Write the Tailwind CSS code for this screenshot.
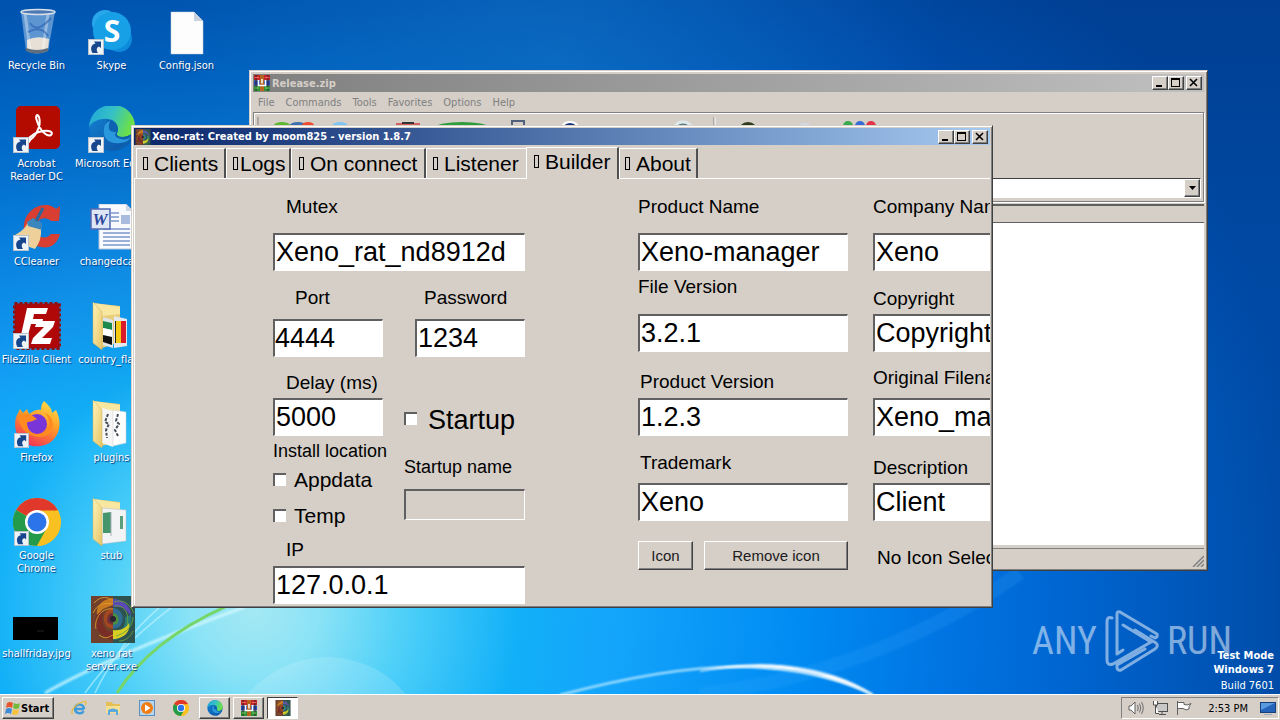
<!DOCTYPE html>
<html lang="en">
  <head>
    <meta charset="UTF-8" />
    <meta name="viewport" content="width=device-width, initial-scale=1.0" />
    <title>Xeno-rat: Created by moom825 - version 1.8.7</title>
    <script src="https://cdn.jsdelivr.net/npm/@tailwindcss/browser@4"></script>
  </head>
  <body class="relative min-h-screen flex flex-col overflow-hidden bg-[#0080e8] font-['DejaVu_Sans_Condensed','DejaVu_Sans',sans-serif] text-[11px] leading-[13px] text-black">
    <!-- Shared icons -->
    <svg class="absolute size-0" aria-hidden="true">
      <defs>
        <linearGradient id="edgeTop" x1="0" y1="0" x2="1" y2="0.3">
          <stop offset="0" stop-color="#1fa5dc" /><stop offset="0.55" stop-color="#35c1c4" /><stop offset="1" stop-color="#6be04a" />
        </linearGradient>
        <linearGradient id="edgeLow" x1="0" y1="0" x2="1" y2="1">
          <stop offset="0" stop-color="#1485d6" /><stop offset="1" stop-color="#0c4fa0" />
        </linearGradient>
        <linearGradient id="folder" x1="0" y1="0" x2="1" y2="1">
          <stop offset="0" stop-color="#fff3b8" /><stop offset="1" stop-color="#e6c566" />
        </linearGradient>
      </defs>
      <symbol id="shortcut" viewBox="0 0 16 16">
        <rect x="0.5" y="0.5" width="15" height="15" fill="#eef3f8" stroke="#b9c3cf" />
        <path d="M4.500 14C2 10 3 5 7.500 4.500L6 2.500L13 2.500L13 9L11 7.500C8.500 8.500 8 11 10 14Z" fill="#17468c" />
      </symbol>
      <symbol id="rar" viewBox="0 0 16 16">
        <rect x="0" y="0" width="16" height="5" fill="#c2262b" />
        <rect x="0" y="5.500" width="16" height="5" fill="#2b4bb0" />
        <rect x="0" y="11" width="16" height="5" fill="#2f8f36" />
        <path d="M2 0V16M14 0V16" stroke="#1c1c1c" stroke-width="0.800" />
        <rect x="6" y="0" width="4" height="16" fill="#b5651d" />
        <path d="M4.500 5V10.500H11.500V5M8 4V8.500" stroke="#fff" stroke-width="1.500" fill="none" />
        <path d="M1 2.500H5M11 2.500H15" stroke="#f06a5a" /><path d="M1 13H5M11 13H15" stroke="#72d163" />
      </symbol>
      <symbol id="xeno" viewBox="0 0 44 48">
        <rect width="44" height="48" fill="#4d4e3c" />
        <rect width="22" height="48" fill="#70402c" />
        <rect x="22" width="22" height="48" fill="#2d5250" />
        <path d="M22 3C10 4 5 12 6 20L12 14L22 10Z" fill="#c8791f" />
        <path d="M6 20C2 30 6 40 22 45V38C12 36 10 28 12 16Z" fill="#7a2c26" />
        <path d="M22 4C34 4 41 14 40 22C36 14 30 11 22 12Z" fill="#5a49b5" />
        <path d="M40 20C42 32 34 44 22 45V38C30 38 35 32 34 22Z" fill="#287a78" />
        <path d="M22 35C30 36 35 33 38 28C40 37 32 44 22 44Z" fill="#d8cf24" />
        <path d="M22 13C13 14 10 24 16 32L22 34Z" fill="#a2481f" />
        <path d="M22 13C32 14 35 25 28 32L22 34Z" fill="#316b92" />
        <path d="M22 18C17 18 15 24 17 28L22 30Z" fill="#6e2d38" />
        <path d="M22 18C28 19 29 25 26 29L22 30Z" fill="#4c8d42" />
        <path d="M3 8C10 0 18 2 22 6M2 18C7 8 14 8 22 9M5 34C3 26 9 12 22 14M8 40C16 46 20 40 22 40" fill="none" stroke="#de9b2d" stroke-width="0.900" />
        <path d="M23 7C34 3 40 12 43 18M23 11C36 9 38 22 36 30M25 41C36 38 42 30 42 22M28 46C36 46 40 40 42 36" fill="none" stroke="#6ba13b" stroke-width="0.900" />
        <circle cx="22" cy="24" r="3" fill="#2a2430" />
      </symbol>
      <symbol id="edge" viewBox="0 0 48 48">
        <circle cx="24" cy="24" r="23" fill="url(#edgeLow)" />
        <path d="M1 23C2 9 12 1 25 1C38 1 47 11 47 22C47 29 41 33 34 33C29 33 28 30 29.500 28C31 25 30 16 20 15C11 14 4 18 1 23Z" fill="url(#edgeTop)" />
        <path d="M20 16C29 17 31 25 29.500 28C28 30 29 33 34 33C39 33 43 31 45 29C42 41 33 47 24 47C32 44 35 41 36 38C25 41 16 36 16 27C16 22 18 18 20 16Z" fill="#0e61b0" />
        <path d="M16 25C14 36 24 42 37 38C40 37 43 34 45 30C43 35 36 37 30 34C26 32 27 30 28 28C22 28 19 26 22 17C18 18 16 21 16 25Z" fill="#2a98dc" />
      </symbol>
      <symbol id="chrome" viewBox="0 0 48 48">
        <circle cx="24" cy="24" r="24" fill="#f8c020" />
        <path d="M24 24L3.200 12A24 24 0 0 1 44.800 12Z" fill="#e0392c" />
        <path d="M24 24L3.200 12A24 24 0 0 0 24 48L34 30Z" fill="#249a4b" />
        <path d="M24 12.500H44.800A24 24 0 0 1 24 48L34 30Z" fill="#f8c020" />
        <circle cx="24" cy="24" r="12" fill="#fff" />
        <circle cx="24" cy="24" r="9.500" fill="#2c74ea" />
      </symbol>
      <symbol id="folderBack" viewBox="0 0 48 48">
        <path d="M5 1L32 4V40L14 46L5 40Z" fill="#e9cd78" />
        <path d="M5 1L32 5V12L14 14Z" fill="#f8e7a1" />
      </symbol>
      <symbol id="folderFlap" viewBox="0 0 48 48">
        <path d="M5 0L14 10V48L5 41Z" fill="url(#folder)" stroke="#cfb15c" stroke-width="0.500" />
      </symbol>
      <symbol id="minimize" viewBox="0 0 12 10"><rect x="2" y="7" width="6" height="2" /></symbol>
      <symbol id="maximize" viewBox="0 0 12 10"><path d="M1 0H10V9H1ZM2 2V8H9V2Z" fill-rule="evenodd" /></symbol>
      <symbol id="close" viewBox="0 0 12 10"><path d="M2 1L9 8M9 1L2 8" stroke="#000" stroke-width="1.600" /></symbol>
    </svg>

    <!-- Wallpaper -->
    <svg class="absolute inset-0 w-full h-full" viewBox="0 0 1280 720" preserveAspectRatio="none" aria-hidden="true">
      <defs>
        <radialGradient id="glow" gradientUnits="userSpaceOnUse" cx="255" cy="610" r="1050">
          <stop offset="0" stop-color="#a4e8f4" />
          <stop offset="0.06" stop-color="#8be3f6" />
          <stop offset="0.14" stop-color="#4fd0f8" />
          <stop offset="0.25" stop-color="#12b0f8" />
          <stop offset="0.34" stop-color="#14a5fb" />
          <stop offset="0.52" stop-color="#008bf3" />
          <stop offset="0.66" stop-color="#0074e2" />
          <stop offset="0.8" stop-color="#0062cc" />
          <stop offset="1" stop-color="#004aa4" />
        </radialGradient>
        <linearGradient id="shade" x1="0" y1="0" x2="0" y2="1">
          <stop offset="0" stop-color="#003888" stop-opacity="0.6" />
          <stop offset="0.25" stop-color="#003f94" stop-opacity="0.4" />
          <stop offset="0.6" stop-color="#004cb0" stop-opacity="0" />
        </linearGradient>
        <radialGradient id="topGlow" gradientUnits="userSpaceOnUse" cx="560" cy="60" r="380">
          <stop offset="0" stop-color="#1478c8" stop-opacity="0.5" />
          <stop offset="1" stop-color="#1078d0" stop-opacity="0" />
        </radialGradient>
        <filter id="soft"><feGaussianBlur stdDeviation="1.200" /></filter>
      </defs>
      <rect width="1280" height="720" fill="url(#glow)" />
      <rect width="1280" height="720" fill="url(#shade)" />
      <rect width="1280" height="300" fill="url(#topGlow)" />
      <path d="M240 700Q280 655 330 656Q385 660 410 700Z" fill="#fff" opacity="0.14" />
      <path d="M45 692Q110 655 245 606" stroke="#d8fbff" stroke-width="3" fill="none" opacity="0.8" filter="url(#soft)" />
      <path d="M85 692Q115 650 172 606M95 692Q120 640 160 606" stroke="#c8f6ff" stroke-width="1.500" fill="none" opacity="0.6" />
      <path d="M117 692Q150 640 225 606" stroke="#76d668" stroke-width="3" fill="none" />
      <path d="M560 694Q690 660 765 667Q830 672 873 694" stroke="#bdeaff" stroke-width="2" fill="none" filter="url(#soft)" />
      <path d="M700 670Q745 663 785 668Q835 675 873 694Q840 671 785 665Q745 661 700 670Z" fill="#fff" stroke="#fff" stroke-width="1" filter="url(#soft)" />
      <path d="M700 694Q880 670 1020 572" stroke="#4db4ff" stroke-width="14" fill="none" opacity="0.15" filter="url(#soft)" />
    </svg>

    <main class="relative flex-1">
      <nav aria-label="Desktop" class="grid grid-flow-col grid-rows-[repeat(7,98px)] auto-cols-[75px] w-max -ml-px pt-2 text-center text-white [text-shadow:1px_1px_1px_#003a80]">
        <a href="#" class="flex flex-col items-center gap-[3px]">
          <svg class="size-12" viewBox="0 0 48 48">
            <path d="M8 4L13 43Q24 48 35 43L42 4Z" fill="#a8c8ea" opacity="0.55" />
            <path d="M14 32Q24 27 36 31L35 42Q24 47 14 42Z" fill="#e6e0d6" />
            <path d="M12 6L17 41M35 6L30 41" stroke="#fff" stroke-width="3" opacity="0.35" />
            <path d="M17 15Q24 26 38 10M15 24Q28 17 35 28" stroke="#295fae" stroke-width="2" fill="none" opacity="0.6" />
            <path d="M13 40Q24 44 35 40L35 43Q24 48 13 43Z" fill="#5f6e7c" />
            <ellipse cx="25" cy="4" rx="17" ry="2.500" fill="#4c78b4" stroke="#d6dfe8" stroke-width="1.500" />
          </svg>
          Recycle Bin
        </a>
        <a href="#" class="flex flex-col items-center gap-[3px]">
          <svg class="size-12" viewBox="0 0 48 48">
            <rect x="3" y="0" width="44" height="43" rx="5" fill="#b30b00" />
            <path d="M15 35C22 32 29 20 26 11C24 7 22 10 24 15C27 25 34 31 38 29C41 26 36 24 30 25C23 26 17 30 14 35C13 38 15 38 18 33" fill="none" stroke="#fff" stroke-width="2" />
            <use href="#shortcut" x="0" y="31" width="16" height="16" />
          </svg>
          <span>Acrobat<br />Reader DC</span>
        </a>
        <a href="#" class="flex flex-col items-center gap-[3px]">
          <svg class="size-12" viewBox="0 0 48 48">
            <path d="M47 5L46 17H38C33 12 24 14 23 23C22 33 32 37 38 30H47C44 41 36 45 28 43C16 41 9 33 11 20C13 7 24 0 35 1C40 2 41 4 43 5L47 2Z" fill="#d93e32" />
            <path d="M2 31Q12 26 15 18L28 25Q29 36 22 45Q12 43 2 31Z" fill="#eed19a" />
            <path d="M14 18L20 14L29 19V26L15 22Z" fill="#3b86bd" />
            <path d="M23 17L30 4" stroke="#2b679b" stroke-width="3" />
            <use href="#shortcut" x="0" y="31" width="16" height="16" />
          </svg>
          CCleaner
        </a>
        <a href="#" class="flex flex-col items-center gap-[3px]">
          <svg class="size-12" viewBox="0 0 48 48">
            <rect x="1.500" y="1.500" width="45" height="45" fill="#b00808" stroke="#8f1212" stroke-width="3" stroke-dasharray="3 2" />
            <path d="M14 6H35L33 12H21L20 17H30L29 22H18L15 33H8Z" fill="#fff" />
            <path d="M24 19H42L40 25L29 36H39L37 42H18L20 36L31 25H22Z" fill="#fff" />
            <use href="#shortcut" x="0" y="31" width="16" height="16" />
          </svg>
          <span class="whitespace-nowrap">FileZilla Client</span>
        </a>
        <a href="#" class="flex flex-col items-center gap-[3px]">
          <svg class="size-12" viewBox="0 0 48 48">
            <defs>
              <linearGradient id="fox" x1="0.8" y1="0" x2="0.3" y2="1"><stop offset="0" stop-color="#ffe04a" /><stop offset="0.45" stop-color="#ff9a26" /><stop offset="1" stop-color="#f0305a" /></linearGradient>
            </defs>
            <path d="M31 1C35 5 39 8 39 13L43 10C48 20 48 31 41 39C33 48 17 49 8 40C1 33 1 21 4 15L7 9L10 13L14 9L16 14C21 10 25 9 28 10C28 6 29 3 31 1Z" fill="url(#fox)" />
            <circle cx="24" cy="24" r="10" fill="#7a35d8" />
            <path d="M5 17C10 12 17 13 24 19C20 21 18 22 14 22C13 33 25 38 33 31C39 26 36 16 31 12C39 16 42 23 38 31C32 42 8 38 5 17Z" fill="#ff8b20" />
            <use href="#shortcut" x="1" y="33" width="15" height="15" />
          </svg>
          Firefox
        </a>
        <a href="#" class="flex flex-col items-center gap-[3px]">
          <svg class="size-12" viewBox="0 0 48 48">
            <use href="#chrome" width="48" height="48" />
            <use href="#shortcut" x="1" y="33" width="15" height="15" />
          </svg>
          <span>Google<br />Chrome</span>
        </a>
        <a href="#" class="flex flex-col items-center gap-[3px]">
          <svg class="size-12" viewBox="0 0 48 48"><rect x="0" y="21" width="45" height="23" fill="#000" /><path d="M24 35H31" stroke="#222" /></svg>
          shallfriday.jpg
        </a>
        <a href="#" class="flex flex-col items-center gap-[3px]">
          <svg class="size-12" viewBox="0 0 48 48">
            <circle cx="17" cy="15" r="13" fill="#28a8ea" /><circle cx="31" cy="31" r="13" fill="#0f8bdc" /><circle cx="24" cy="23" r="19" fill="#17a0e6" />
            <text x="24" y="34" text-anchor="middle" font-family="Open Sans, sans-serif" font-weight="700" font-size="30" fill="#fff" style="text-shadow: none">S</text>
            <use href="#shortcut" x="0" y="31" width="16" height="16" />
          </svg>
          Skype
        </a>
        <a href="#" class="flex flex-col items-center gap-[3px]">
          <svg class="size-12" viewBox="0 0 48 48">
            <use href="#edge" y="-2" width="48" height="48" />
            <use href="#shortcut" x="0" y="31" width="16" height="16" />
          </svg>
          <span class="whitespace-nowrap">Microsoft Edge</span>
        </a>
        <a href="#" class="flex flex-col items-center gap-[3px]">
          <svg class="size-12" viewBox="0 0 48 48">
            <path d="M11 0H38L45 7V45H11Z" fill="#f8fafd" stroke="#b5c2dc" />
            <path d="M38 0V7H45Z" fill="#cdd6e6" />
            <path d="M23 9H31M23 13H31M23 17H31M15 25H42M15 29H42M15 33H42M15 37H42M15 41H42" stroke="#7c98cc" stroke-width="1.500" />
            <rect x="33" y="11" width="9" height="9" fill="#a9bce0" />
            <rect x="3" y="5" width="19" height="20" fill="#dfe6f6" stroke="#5168b2" stroke-width="1.500" />
            <text x="12" y="21" text-anchor="middle" font-family="Liberation Serif, serif" font-weight="700" font-style="italic" font-size="17" fill="#2c469c" style="text-shadow: none">W</text>
          </svg>
          changedca...
        </a>
        <a href="#" class="flex flex-col items-center gap-[3px]">
          <svg class="size-12" viewBox="0 0 48 48">
            <use href="#folderBack" width="48" height="48" />
            <path d="M15 15L25 18V46L15 43Z" fill="#dde4ec" /><path d="M15 19L24 21V28L15 26Z" fill="#1c8a4c" /><path d="M15 26L24 28V35L15 33Z" fill="#fff" /><path d="M15 33L24 35V43L15 40Z" fill="#111" />
            <path d="M26 14L39 17V44L26 46Z" fill="#e4e7ec" /><path d="M27 19H29V41H27Z" fill="#222" /><path d="M28 19H33V41H28Z" fill="#f6c914" /><path d="M33 19H38V41H33Z" fill="#d81c2c" />
            <use href="#folderFlap" width="48" height="48" />
          </svg>
          <span class="whitespace-nowrap">country_flags</span>
        </a>
        <a href="#" class="flex flex-col items-center gap-[3px]">
          <svg class="size-12" viewBox="0 0 48 48">
            <use href="#folderBack" width="48" height="48" />
            <path d="M14 8L25 11V47L14 43Z" fill="#f6f6f6" /><path d="M25 10L38 12V43L25 46Z" fill="#fff" stroke="#c8c8c8" stroke-width="0.500" />
            <path d="M20 14L17 22L21 24L18 30L19 38M30 14L28 21L31 24L27 30L30 36" stroke="#46505a" stroke-width="2" fill="none" stroke-dasharray="3 1.500" />
            <use href="#folderFlap" width="48" height="48" />
          </svg>
          plugins
        </a>
        <a href="#" class="flex flex-col items-center gap-[3px]">
          <svg class="size-12" viewBox="0 0 48 48">
            <use href="#folderBack" width="48" height="48" />
            <path d="M14 10L38 12V43L14 46Z" fill="#f2f3f5" stroke="#b8bcc2" stroke-width="0.500" /><path d="M15 15L23 14V35H15Z" fill="#45966c" /><path d="M32 18H35V31H32Z" fill="#5c9d7a" /><path d="M23 14V38" stroke="#a9b1b8" />
            <use href="#folderFlap" width="48" height="48" />
          </svg>
          stub
        </a>
        <a href="#" class="flex flex-col items-center gap-[3px]">
          <svg class="size-12" viewBox="0 0 48 48"><use href="#xeno" x="3" y="-1" width="44" height="48" /></svg>
          <span>xeno rat<br />server.exe</span>
        </a>
        <a href="#" class="flex flex-col items-center gap-[3px]">
          <svg class="size-12" viewBox="0 0 48 48">
            <path d="M8 4H31L40 13V46H8Z" fill="#fdfdfd" stroke="#c8ced6" stroke-width="0.500" /><path d="M31 4V13H40Z" fill="#c7d2de" />
          </svg>
          Config.json
        </a>
      </nav>

      <!-- Archive window -->
      <section aria-label="Release.zip" class="absolute left-[249px] right-[72px] top-[70px] bottom-[123px] flex flex-col bg-[#d5cfc8] p-[3px] border border-t-[#d5cfc8] border-l-[#d5cfc8] border-r-[#404040] border-b-[#404040] shadow-[inset_1px_1px_0_#fff,inset_-1px_-1px_0_#808080]">
        <header class="flex items-center h-[18px] pr-0.5 bg-linear-to-r from-[#808080] to-[#c0c0c0] text-[#d5cfc8] font-bold">
          <svg class="size-4 mx-px"><use href="#rar" /></svg>
          <h2 class="ml-px mr-auto">Release.zip</h2>
          <button aria-label="Minimize" class="w-4 h-3.5 bg-[#d5cfc8] border border-t-white border-l-white border-r-[#404040] border-b-[#404040] shadow-[inset_-1px_-1px_0_#808080]"><svg class="w-3 h-2.5 mx-auto"><use href="#minimize" /></svg></button>
          <button aria-label="Maximize" class="w-4 h-3.5 bg-[#d5cfc8] border border-t-white border-l-white border-r-[#404040] border-b-[#404040] shadow-[inset_-1px_-1px_0_#808080]"><svg class="w-3 h-2.5 mx-auto"><use href="#maximize" /></svg></button>
          <button aria-label="Close" class="w-4 h-3.5 ml-0.5 bg-[#d5cfc8] border border-t-white border-l-white border-r-[#404040] border-b-[#404040] shadow-[inset_-1px_-1px_0_#808080]"><svg class="w-3 h-2.5 mx-auto"><use href="#close" /></svg></button>
        </header>
        <nav aria-label="Archive menu" class="flex items-center gap-[11px] h-5 px-[5px] text-[#808080]">
          <button>File</button><button>Commands</button><button>Tools</button><button>Favorites</button><button>Options</button><button>Help</button>
        </nav>
        <div class="flex flex-col h-[90px] border border-[#808080] shadow-[inset_1px_1px_0_#fff,1px_1px_0_#fff]">
          <svg class="w-full h-16" fill="none" aria-hidden="true">
            <path d="M4 4V60" stroke="#808080" /><path d="M460 4V60" stroke="#808080" /><path d="M461 4V60" stroke="#fff" />
            <ellipse cx="28" cy="12" rx="8" ry="3" fill="#5fb832" /><ellipse cx="44" cy="12" rx="8" ry="3" fill="#3c6fae" /><ellipse cx="54" cy="12" rx="6" ry="3" fill="#ee4b2e" />
            <ellipse cx="86" cy="13" rx="8" ry="4" fill="#7dc4f4" />
            <path d="M142 10H166V12H142Z" fill="#d65f5f" /><path d="M148 10H160" stroke="#333" stroke-width="2" />
            <ellipse cx="208" cy="14" rx="26" ry="5" fill="#2e9e3c" />
            <path d="M258 12V8H270V12" stroke="#50607c" stroke-width="2" />
            <circle cx="316" cy="19" r="10" fill="#18327e" stroke="#fff" stroke-width="2" />
            <circle cx="429" cy="19" r="10" fill="#5c7c84" stroke="#dfe9ec" stroke-width="3" />
            <circle cx="494" cy="19" r="10" fill="#2d3c1c" /><circle cx="551" cy="20" r="10" fill="#cfdbe8" />
            <circle cx="594" cy="13" r="5" fill="#3aa84c" /><circle cx="606" cy="13" r="5" fill="#3a6cd8" /><circle cx="617" cy="13" r="5" fill="#e13448" />
          </svg>
          <label for="archive-path" class="sr-only">Archive path</label>
          <div class="relative mt-px ml-8 mr-0.5">
            <select id="archive-path" class="block w-full h-[21px] appearance-none bg-white border border-t-[#404040] border-l-[#808080] border-r-white border-b-[#d5cfc8]"><option></option></select>
            <span class="pointer-events-none absolute right-px top-px flex items-center justify-center w-4 h-[18px] bg-[#d5cfc8] border border-t-white border-l-white border-r-[#404040] border-b-[#404040] shadow-[inset_-1px_-1px_0_#808080]">
              <svg class="w-[7px] h-1" viewBox="0 0 7 4"><path d="M0 0H7L3.500 4Z" /></svg>
            </span>
          </div>
        </div>
        <div class="flex flex-1 flex-col mt-0.5 bg-white border-t-2 border-l border-t-[#606060] border-l-[#808080]">
          <div class="h-[17px] bg-[#d5cfc8] border-b border-[#606060]"></div>
        </div>
        <footer class="flex justify-end items-end h-[19px] mt-[3px] border-t border-[#808080]">
          <svg class="size-3" viewBox="0 0 12 12" stroke="#808080" stroke-width="1.500"><path d="M1 12L12 1M5 12L12 5M9 12L12 9" /></svg>
        </footer>
      </section>

      <!-- Builder window -->
      <section aria-label="Xeno-rat" class="absolute left-[131px] top-[125px] w-[862px] bg-[#d5cfc8] p-0.5 border border-t-[#d5cfc8] border-l-[#d5cfc8] border-r-[#404040] border-b-[#404040] shadow-[inset_1px_1px_0_#fff,inset_-1px_-1px_0_#808080]">
        <header class="flex items-center h-[17px] pr-0.5 bg-linear-to-r from-[#0a246a] to-[#a6caf0] text-white font-bold">
          <svg class="size-4 mx-px"><use href="#xeno" /></svg>
          <h1 class="mr-auto">Xeno-rat: Created by moom825 - version 1.8.7</h1>
          <button aria-label="Minimize" class="w-4 h-3.5 bg-[#d5cfc8] border border-t-white border-l-white border-r-[#404040] border-b-[#404040] shadow-[inset_-1px_-1px_0_#808080]"><svg class="w-3 h-2.5 mx-auto"><use href="#minimize" /></svg></button>
          <button aria-label="Maximize" class="w-4 h-3.5 bg-[#d5cfc8] border border-t-white border-l-white border-r-[#404040] border-b-[#404040] shadow-[inset_-1px_-1px_0_#808080]"><svg class="w-3 h-2.5 mx-auto"><use href="#maximize" /></svg></button>
          <button aria-label="Close" class="w-4 h-3.5 ml-0.5 bg-[#d5cfc8] border border-t-white border-l-white border-r-[#404040] border-b-[#404040] shadow-[inset_-1px_-1px_0_#808080]"><svg class="w-3 h-2.5 mx-auto"><use href="#close" /></svg></button>
        </header>

        <div role="tablist" class="flex items-end h-[33px] pl-0.5 font-['Liberation_Sans',sans-serif] text-[21px] leading-6">
          <button role="tab" class="flex items-center gap-1.5 w-[90px] h-[30px] pl-1.5 border-t border-l border-r-2 border-t-white border-l-white border-r-[#505050]"><i class="w-[5px] h-[13px] border border-black"></i>Clients</button>
          <button role="tab" class="flex items-center gap-0.5 w-[65px] h-[30px] pl-1.5 border-t border-l border-r-2 border-t-white border-l-white border-r-[#505050]"><i class="w-[5px] h-[13px] border border-black"></i>Logs</button>
          <button role="tab" class="flex items-center gap-1.5 w-[135px] h-[30px] pl-[7px] border-t border-l border-r-2 border-t-white border-l-white border-r-[#505050]"><i class="w-[5px] h-[13px] border border-black"></i>On connect</button>
          <button role="tab" class="flex items-center gap-1.5 w-[100px] h-[30px] pl-1.5 border-t border-l border-t-white border-l-white"><i class="w-[5px] h-[13px] border border-black"></i>Listener</button>
          <button role="tab" aria-selected="true" class="relative flex items-center gap-1.5 w-[93px] h-8 -mb-px pb-1 pl-[7px] bg-[#d5cfc8] border-t border-l border-r-2 border-t-white border-l-white border-r-[#505050]"><i class="w-[5px] h-[13px] border border-black"></i>Builder</button>
          <button role="tab" class="flex items-center gap-1.5 w-[79px] h-[30px] pl-[5px] border-t border-l border-r-2 border-t-white border-l-white border-r-[#505050]"><i class="w-[5px] h-[13px] border border-black"></i>About</button>
        </div>

        <form class="flex pt-4 pb-px pl-[138px] overflow-hidden border-t border-l border-white font-['Liberation_Sans',sans-serif] text-[19px] leading-6">
          <div class="flex flex-col shrink-0 w-[252px]">
            <label for="mutex" class="pl-[13px]">Mutex</label>
            <input id="mutex" type="text" value="Xeno_rat_nd8912d" class="w-full h-[38px] mt-3.5 px-px bg-white text-[27px] border-t-2 border-l-2 border-r border-b border-t-[#606060] border-l-[#606060] border-r-white border-b-white" />
            <div class="flex justify-between mt-[15px]">
              <div class="flex flex-col w-[110px]">
                <label for="port" class="pl-[22px]">Port</label>
                <input id="port" type="text" value="4444" class="w-full h-[38px] mt-[9px] bg-white text-[27px] border-t-2 border-l-2 border-r border-b border-t-[#606060] border-l-[#606060] border-r-white border-b-white" />
                <label for="delay" class="pl-[13px] mt-3.5">Delay (ms)</label>
                <input id="delay" type="text" value="5000" class="w-full h-[38px] mt-[3px] px-px bg-white text-[27px] border-t-2 border-l-2 border-r border-b border-t-[#606060] border-l-[#606060] border-r-white border-b-white" />
                <p class="mt-[3px] whitespace-nowrap text-[18px]">Install location</p>
                <label class="flex items-center gap-2 mt-[5px] text-[21px]">
                  <input type="checkbox" class="appearance-none size-[13px] mb-0.5 bg-white border-t-2 border-l-2 border-t-[#606060] border-l-[#606060]" />Appdata
                </label>
                <label class="flex items-center gap-2 mt-3 text-[21px]">
                  <input type="checkbox" class="appearance-none size-[13px] mb-0.5 bg-white border-t-2 border-l-2 border-t-[#606060] border-l-[#606060]" />Temp
                </label>
              </div>
              <div class="flex flex-col w-[121px]">
                <label for="password" class="pl-5">Password</label>
                <input id="password" type="text" value="1234" class="h-[38px] mt-[9px] ml-[11px] px-px min-w-0 bg-white text-[27px] border-t-2 border-l-2 border-r border-b border-t-[#606060] border-l-[#606060] border-r-white border-b-white" />
                <label class="flex items-center gap-[11px] h-8 mt-[47px] text-[27px]">
                  <input type="checkbox" class="appearance-none size-[13px] mb-1 bg-white border-t-2 border-l-2 border-t-[#606060] border-l-[#606060]" />Startup
                </label>
                <label for="startup-name" class="mt-[19px] whitespace-nowrap text-[18px]">Startup name</label>
                <input id="startup-name" type="text" disabled class="w-full h-[31px] mt-2.5 border-t-2 border-l-2 border-r border-b border-t-[#606060] border-l-[#606060] border-r-white border-b-white" />
              </div>
            </div>
            <label for="ip" class="mt-2.5 pl-[13px]">IP</label>
            <input id="ip" type="text" value="127.0.0.1" class="w-full h-[38px] mt-1 px-px bg-white text-[27px] border-t-2 border-l-2 border-r border-b border-t-[#606060] border-l-[#606060] border-r-white border-b-white" />
          </div>

          <div class="flex flex-col shrink-0 w-[210px] ml-[113px]">
            <label for="product-name">Product Name</label>
            <input id="product-name" type="text" value="Xeno-manager" class="w-full h-[38px] mt-3.5 px-px bg-white text-[27px] border-t-2 border-l-2 border-r border-b border-t-[#606060] border-l-[#606060] border-r-white border-b-white" />
            <label for="file-version" class="mt-1">File Version</label>
            <input id="file-version" type="text" value="3.2.1" class="w-full h-[38px] mt-[15px] px-px bg-white text-[27px] border-t-2 border-l-2 border-r border-b border-t-[#606060] border-l-[#606060] border-r-white border-b-white" />
            <label for="product-version" class="mt-[18px] pl-0.5">Product Version</label>
            <input id="product-version" type="text" value="1.2.3" class="w-full h-[38px] mt-1 px-px bg-white text-[27px] border-t-2 border-l-2 border-r border-b border-t-[#606060] border-l-[#606060] border-r-white border-b-white" />
            <label for="trademark" class="mt-[15px] pl-0.5">Trademark</label>
            <input id="trademark" type="text" value="Xeno" class="w-full h-[38px] mt-2 px-px bg-white text-[27px] border-t-2 border-l-2 border-r border-b border-t-[#606060] border-l-[#606060] border-r-white border-b-white" />
            <div class="flex gap-[11px] mt-5 text-[15px] text-[#202020]">
              <button type="button" class="w-[55px] h-[29px] border border-t-white border-l-white border-r-[#404040] border-b-[#404040] shadow-[inset_-1px_-1px_0_#808080]">Icon</button>
              <button type="button" class="flex-1 h-[29px] border border-t-white border-l-white border-r-[#404040] border-b-[#404040] shadow-[inset_-1px_-1px_0_#808080]">Remove icon</button>
            </div>
          </div>

          <div class="flex flex-col shrink-0 w-[210px] ml-[25px]">
            <label for="company-name">Company Name</label>
            <input id="company-name" type="text" value="Xeno" class="w-full h-[38px] mt-3.5 px-px bg-white text-[27px] border-t-2 border-l-2 border-t-[#606060] border-l-[#606060] border-b border-b-white" />
            <label for="copyright" class="mt-4">Copyright</label>
            <input id="copyright" type="text" value="Copyright" class="w-full h-[38px] mt-[3px] px-px bg-white text-[27px] border-t-2 border-l-2 border-t-[#606060] border-l-[#606060] border-b border-b-white" />
            <label for="original-filename" class="mt-3.5">Original Filename</label>
            <input id="original-filename" type="text" value="Xeno_manager" class="w-full h-[38px] mt-2 px-px bg-white text-[27px] border-t-2 border-l-2 border-t-[#606060] border-l-[#606060] border-b border-b-white" />
            <label for="description" class="mt-5">Description</label>
            <input id="description" type="text" value="Client" class="w-full h-[38px] mt-[3px] px-px bg-white text-[27px] border-t-2 border-l-2 border-t-[#606060] border-l-[#606060] border-b border-b-white" />
            <p class="mt-[25px] pl-1">No Icon Selected</p>
          </div>
        </form>
      </section>

      <!-- Watermark -->
      <div class="absolute right-12 bottom-[22px] flex items-center gap-2 text-white/50 font-['Roboto_Condensed','DejaVu_Sans_Condensed',sans-serif] text-[38px] leading-10">
        <span>ANY</span>
        <svg class="w-[54px] h-[62px]" viewBox="0 0 54 62" fill="none" stroke="currentColor" stroke-width="3" stroke-linejoin="round" stroke-linecap="round">
          <path d="M7 8Q2 6 2 12V50Q2 56 8 54L46 32L18 15M12 44V4Q12 1 15 2L52 24Q53 27 50 28L46 26M12 55V58Q13 61 16 60L50 39Q54 36 51 33L30 20M12 44L18 40M12 55L40 39" />
        </svg>
        <span>RUN</span>
      </div>
      <div class="absolute right-1.5 bottom-px text-right text-white leading-[14px]">
        <p class="font-bold">Test Mode</p>
        <p class="font-bold">Windows 7</p>
        <p class="mt-0.5">Build 7601</p>
      </div>
    </main>

    <!-- Taskbar -->
    <footer class="relative flex items-center h-[27px] pl-0.5 bg-[#d5cfc8] border-t border-white">
      <button class="flex items-center w-[52px] h-[22px] pl-0.5 font-bold border border-t-white border-l-white border-r-[#404040] border-b-[#404040] shadow-[inset_-1px_-1px_0_#808080]">
        <svg class="size-4" viewBox="0 0 16 16"><path d="M2 3Q5 1 8 3L7 8Q4 6 1 8Z" fill="#e8542c" /><path d="M9 3Q12 5 15 3L14 8Q11 10 8 8Z" fill="#76b83c" /><path d="M1 9Q4 7 7 9L6 14Q3 12 0 14Z" fill="#3c8ad8" /><path d="M8 9Q11 11 14 9L13 14Q10 16 7 14Z" fill="#f7c33c" /></svg>Start
      </button>
      <nav aria-label="Quick launch" class="flex items-center gap-[18px] ml-[17px]">
        <button aria-label="Internet Explorer"><svg class="size-4" viewBox="0 0 16 16" fill="none"><path d="M13 9H5M13 9C13 3 4 3 4 8.500C4 14 11 14.500 12.500 11" stroke="#3e9cdc" stroke-width="2.500" /><path d="M1.500 14C-1 11 5 4 11 2C16 0 15.500 3 14 5" stroke="#e8bb3c" stroke-width="1.300" /></svg></button>
        <button aria-label="Explorer"><svg class="size-4" viewBox="0 0 16 16"><path d="M1 2H7L8 4H15V13H1Z" fill="#e4bf58" /><path d="M1 6H15V13H1Z" fill="#f5df92" /><path d="M3 15V10Q8 7 13 10V15H11V12H5V15Z" fill="#5aaae0" /></svg></button>
        <button aria-label="Media Player"><svg class="size-4" viewBox="0 0 16 16"><rect x="0.500" y="0.500" width="15" height="15" fill="#b8d5ec" stroke="#5a8fc2" /><circle cx="8" cy="8" r="6" fill="#ef7d14" /><path d="M6 4.500L11.500 8L6 11.500Z" fill="#fff" /></svg></button>
        <button aria-label="Chrome"><svg class="size-4"><use href="#chrome" /></svg></button>
      </nav>
      <div class="flex gap-[3px] ml-2.5">
        <button aria-label="Edge" class="flex items-center justify-center w-[31px] h-[22px] border border-t-white border-l-white border-r-[#404040] border-b-[#404040] shadow-[inset_-1px_-1px_0_#808080]"><svg class="size-4"><use href="#edge" /></svg></button>
        <button aria-label="Release.zip" class="flex items-center justify-center w-[31px] h-[22px] border border-t-white border-l-white border-r-[#404040] border-b-[#404040] shadow-[inset_-1px_-1px_0_#808080]"><svg class="size-4"><use href="#rar" /></svg></button>
        <button aria-label="Xeno-rat" class="flex items-center justify-center w-[31px] h-[22px] bg-white border border-t-[#404040] border-l-[#404040] border-r-white border-b-white"><svg class="size-4"><use href="#xeno" /></svg></button>
      </div>
      <div class="flex items-center gap-2 h-[22px] ml-auto mr-px pl-1.5 pr-0.5 border border-t-[#808080] border-l-[#808080] border-r-white border-b-white">
        <svg class="size-4" viewBox="0 0 16 16" fill="#fff" stroke="#606060"><path d="M1 6H3L7 2V14L3 10H1Z" /><path d="M9.500 5Q11 8 9.500 11M11.500 3.500Q14 8 11.500 12.500M13.500 2Q17 8 13.500 14" fill="none" stroke-width="0.900" /></svg>
        <svg class="size-4" viewBox="0 0 16 16" fill="#fff" stroke="#505050"><rect x="4.500" y="3.500" width="11" height="8" fill="#c8c8c8" /><path d="M7 14.500H14M10 12V14" /><path d="M1.500 1V5H5.500V1M3.500 5V13.500H7" /></svg>
        <svg class="size-4" viewBox="0 0 16 16" fill="#fff" stroke="#606060"><path d="M1.500 1V15M2 2.500H8V4.500Q11 6 15 3.500Q12 7 13 9Q10 11 7 8.500H2" /></svg>
        <time class="ml-2 mr-1 whitespace-nowrap">2:53 PM</time>
        <svg class="w-4 h-4" viewBox="0 0 16 16"><rect x="0.500" y="2.500" width="15" height="10" fill="#2464b8" stroke="#16407c" /><path d="M1 3H15L1 10Z" fill="#5a9be0" /><path d="M4 14.500H12" stroke="#9ab" /></svg>
      </div>
    </footer>
  </body>
</html>
